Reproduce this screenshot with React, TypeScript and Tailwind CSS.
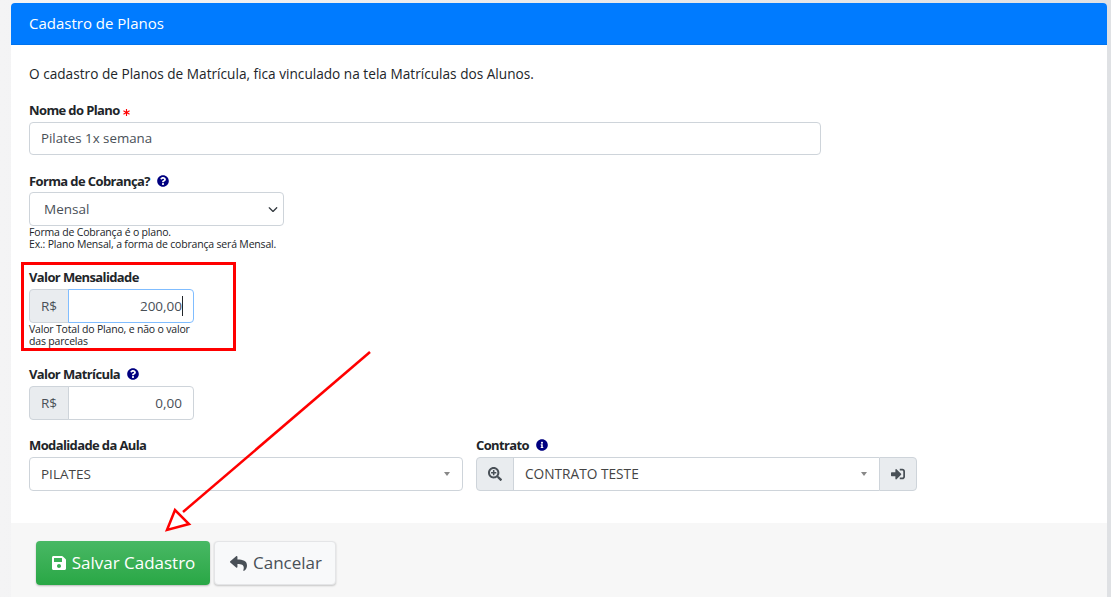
import { FaAsterisk, FaInfoCircle, FaQuestionCircle, FaReply, FaSave, FaSearchPlus, FaSignInAlt } from "react-icons/fa"
import { FaChevronDown } from "react-icons/fa6"

const font = { fontFamily: '"Open Sans", "Noto Sans", sans-serif' }

function Label({ children, className }: { children: React.ReactNode; className?: string }) {
  return (
    <div className={`flex h-[20px] items-center text-[13px] font-bold leading-none tracking-[-0.62px] text-[#212529] ${className ?? ""}`}>
      {children}
    </div>
  )
}

function Help({ children }: { children: React.ReactNode }) {
  return <p className="text-[10.5px] leading-[12px] tracking-[-0.18px] text-[#212529]">{children}</p>
}

function Money({ value, focused }: { value: string; focused?: boolean }) {
  return (
    <div className="flex h-[34px] w-[165px] text-[13.5px] text-[#495057]">
      <div className="flex w-[40px] items-center justify-center rounded-l-[4px] border border-[#ced4da] bg-[#e9ecef]">R$</div>
      <div
        className={`relative -ml-px flex flex-1 items-center justify-end rounded-r-[4px] border pr-[11px] ${focused ? "border-[#80bdff]" : "border-[#ced4da]"}`}
      >
        {value}
        {focused && <span className="absolute right-[10px] top-[6px] h-[20px] w-px bg-[#212529]" />}
      </div>
    </div>
  )
}

function Caret() {
  return <span className="h-0 w-0 border-x-[3px] border-t-[4px] border-x-transparent border-t-[#888888]" />
}

export default function App() {
  return (
    <div className="relative h-[597px] w-[1111px] overflow-hidden bg-gradient-to-r from-[#f4f4f5] to-[#dfe1e4] pl-[11px] pr-[4px] pt-[3px]" style={font}>
      <div className="flex h-[594px] flex-col rounded-t-[4px] bg-white">
        <div className="flex h-[42px] items-center rounded-t-[4px] border-b border-[#0073ee] bg-[#007bff] px-[18px] text-[15px] text-white">
          Cadastro de Planos
        </div>

        <div className="h-[478px] px-[18px] pt-[19px]">
          <p className="text-[13.65px] leading-[20px] text-[#212529]">
            O cadastro de Planos de Matrícula, fica vinculado na tela Matrículas dos Alunos.
          </p>

          <Label className="mt-[16px] gap-[3px]">
            Nome do Plano <FaAsterisk className="mt-[4px] text-[7px] text-[#ff0000]" />
          </Label>
          <div className="mt-[2px] flex h-[33px] w-[792px] items-center rounded-[4px] border border-[#ced4da] pl-[11px] pt-px text-[13.3px] text-[#495057]">
            Pilates 1x semana
          </div>

          <Label className="mt-[16px] gap-[7px]">
            Forma de Cobrança? <FaQuestionCircle className="text-[12px] text-[#000080]" />
          </Label>
          <div className="mt-[1px] flex h-[34px] w-[255px] items-center justify-between rounded-[4px] border border-[#ced4da] pl-[14px] pr-[5px] text-[13.5px] text-[#495057]">
            <span className="pt-px">Mensal</span>
            <FaChevronDown className="text-[10px] text-[#343a40]" />
          </div>
          <div>
            <Help>Forma de Cobrança é o plano.</Help>
            <Help>Ex.: Plano Mensal, a forma de cobrança será Mensal.</Help>
          </div>

          <Label className="mt-[17px]">Valor Mensalidade</Label>
          <div className="mt-[2px]">
            <Money value="200,00" focused />
          </div>
          <div className="w-[170px]">
            <Help>Valor Total do Plano, e não o valor das parcelas</Help>
          </div>

          <Label className="mt-[17px] gap-[7px]">
            Valor Matrícula <FaQuestionCircle className="text-[12px] text-[#000080]" />
          </Label>
          <div className="mt-[2px]">
            <Money value="0,00" />
          </div>

          <div className="mt-[15px] flex gap-[13px]">
            <div className="w-[434px]">
              <Label>Modalidade da Aula</Label>
              <div className="mt-[2px] flex h-[34px] items-center justify-between rounded-[4px] border border-[#ced4da] pl-[11px] pr-[12px] text-[13.5px] text-[#444444]">
                <span className="pt-px">PILATES</span>
                <Caret />
              </div>
            </div>
            <div className="w-[441px]">
              <Label className="gap-[7px]">
                Contrato <FaInfoCircle className="text-[12px] text-[#000080]" />
              </Label>
              <div className="mt-[2px] flex h-[34px] text-[#495057]">
                <div className="flex w-[38px] items-center justify-center rounded-l-[4px] border border-[#ced4da] bg-[#e9ecef] text-[14px]">
                  <FaSearchPlus />
                </div>
                <div className="-ml-px flex flex-1 items-center justify-between border-y border-[#ced4da] pl-[12px] pr-[12px] text-[13.7px] text-[#444444]">
                  <span className="pt-px">CONTRATO TESTE</span>
                  <Caret />
                </div>
                <div className="flex w-[38px] items-center justify-center rounded-r-[4px] border border-[#ced4da] bg-[#e9ecef] text-[14px]">
                  <FaSignInAlt />
                </div>
              </div>
            </div>
          </div>
        </div>

        <div className="flex flex-1 items-start gap-[4px] bg-[#f7f7f7] pl-[25px] pt-[18px]">
          <button className="flex h-[44px] w-[174px] items-center justify-center gap-[5px] rounded-[4px] bg-gradient-to-b from-[#48b864] to-[#28a745] text-[17px] text-white shadow-[0_1px_2px_rgba(0,0,0,0.25)]">
            <FaSave className="text-[16px]" /> Salvar Cadastro
          </button>
          <button className="flex h-[44px] w-[122px] items-center justify-center gap-[6px] rounded-[4px] border border-[#e4e5e7] bg-[#f8f9fa] pl-[2px] text-[17px] text-[#495057] shadow-[0_1px_2px_rgba(0,0,0,0.2)]">
            <FaReply className="text-[17px]" /> Cancelar
          </button>
        </div>
      </div>

      {/* annotations drawn over the page */}
      <div className="absolute left-[21px] top-[262px] h-[89px] w-[215px] border-[3px] border-[#ff0000]" />
      <svg className="absolute left-0 top-0" width="1111" height="597" fill="none">
        <path d="M370 352 L183 512" stroke="#ff0000" strokeWidth="2.5" />
        <path d="M175 510 L167 530 L189 524 Z" stroke="#ff0000" strokeWidth="2.5" fill="#ffffff" />
      </svg>
    </div>
  )
}
